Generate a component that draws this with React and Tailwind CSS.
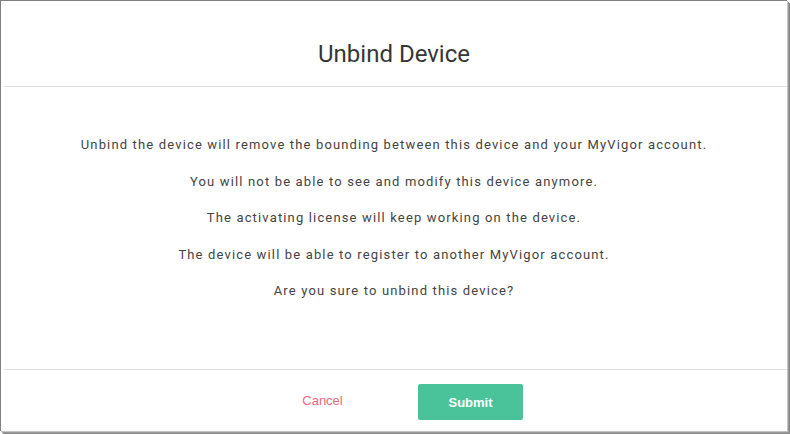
import React from "react";

const lines = [
    "Unbind the device will remove the bounding between this device and your MyVigor account.",
    "You will not be able to see and modify this device anymore.",
    "The activating license will keep working on the device.",
    "The device will be able to register to another MyVigor account.",
    "Are you sure to unbind this device?",
];

const App = () => {
    return (
        <div className="w-[790px] h-[434px] bg-white">
            <div className="w-[787px] h-[431px] bg-white border-t border-l border-[#808080] shadow-[1px_1px_0_#c4c4c4,2px_2px_0_#9a9a9a,3px_3px_0_#868686] flex flex-col font-['Roboto',sans-serif]">
                <div className="h-[85px] pt-[39px] text-center text-[24px] leading-[28px] text-[#363636]">
                    Unbind Device
                </div>
                <div className="ml-[3px] h-px bg-[#e0dfe5]" />
                <div className="h-[282px] pt-[40px] text-center text-[13px] leading-[36.5px] tracking-[1.15px] text-[#444]">
                    {lines.map((line) => (
                        <p key={line}>{line}</p>
                    ))}
                </div>
                <div className="ml-[3px] h-px bg-[#e2e2e2]" />
                <div className="flex-1 flex justify-center items-start pt-[14px] pl-[5px] gap-[43px] font-['Liberation_Sans',sans-serif] text-[13px]">
                    <button className="w-[105px] h-[36px] pb-[2px] text-[#f0677e]">Cancel</button>
                    <button className="w-[105px] h-[36px] pt-[2px] rounded-[2px] bg-[#4bc39a] text-white font-bold">
                        Submit
                    </button>
                </div>
            </div>
        </div>
    );
};

export default App;
